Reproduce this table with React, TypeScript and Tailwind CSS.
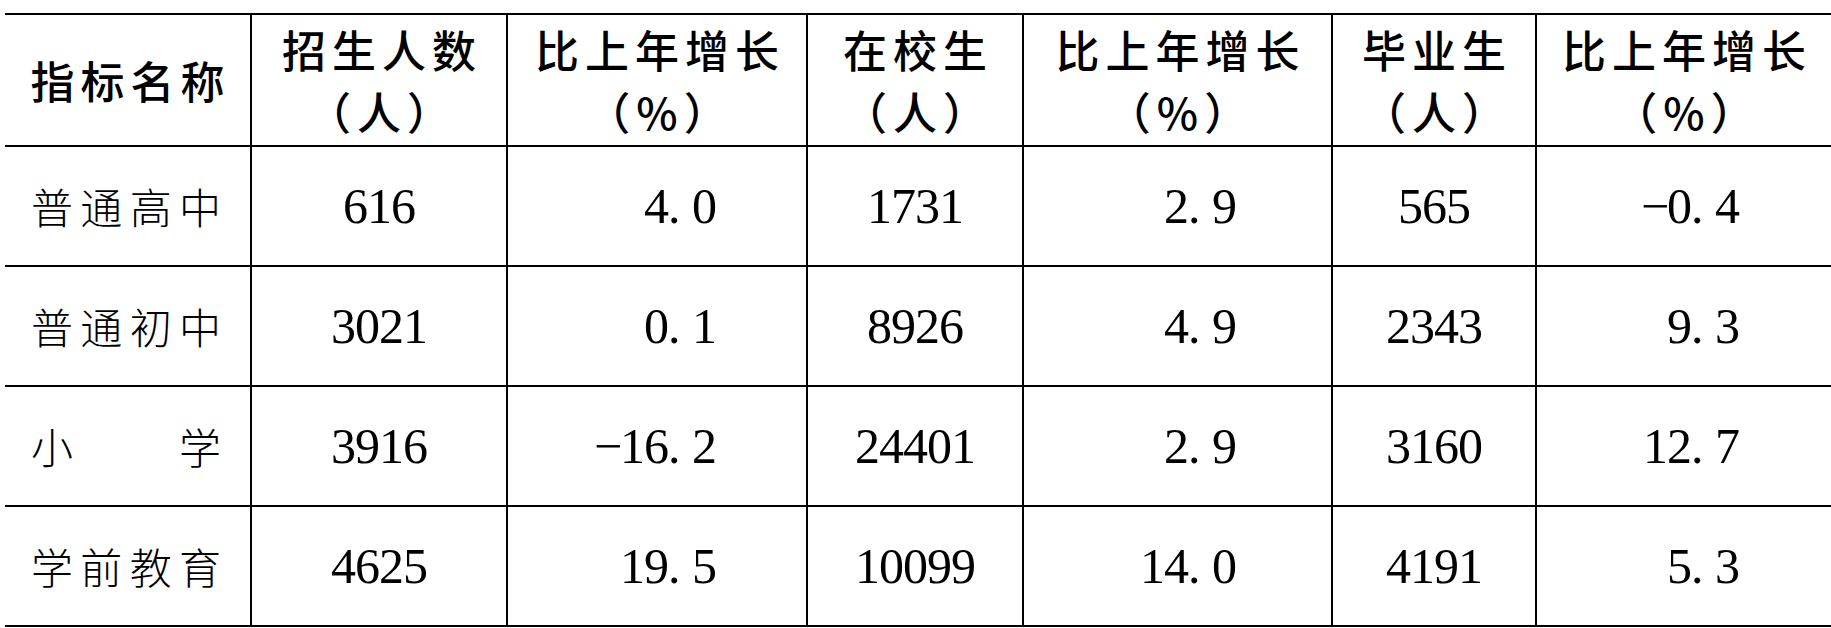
import React from "react";

const cjk = "font-['Noto_Sans_CJK_SC',sans-serif]";
const num = "font-['Liberation_Serif','Noto_Sans_CJK_SC',serif]";

type Row = {
  name: string;
  v: [string, string, string, string, string, string];
};

const rows: Row[] = [
  { name: "普通高中", v: ["616", "4.0", "1731", "2.9", "565", "-0.4"] },
  { name: "普通初中", v: ["3021", "0.1", "8926", "4.9", "2343", "9.3"] },
  { name: "小学", v: ["3916", "-16.2", "24401", "2.9", "3160", "12.7"] },
  { name: "学前教育", v: ["4625", "19.5", "10099", "14.0", "4191", "5.3"] },
];

function Num({ text }: { text: string }) {
  const neg = text.startsWith("-");
  const body = neg ? text.slice(1) : text;
  const [a, b] = body.split(".");
  return (
    <span className={`${num} text-[50px] tracking-[-1px] leading-none text-black whitespace-nowrap`}>
      {neg && <span className="inline-block w-[26px] text-left">−</span>}
      {a}
      {b !== undefined && (
        <>
          <span className="inline-block w-[24px] text-left">.</span>
          {b}
        </>
      )}
    </span>
  );
}

function Head({ l1, l2 }: { l1: string; l2?: string }) {
  return (
    <div
      className={`${cjk} font-medium text-[44px] tracking-[6px] leading-[62px] text-black text-center pl-[6px] flex flex-col items-center justify-center`}
    >
      <span>{l1}</span>
      {l2 && <span>{l2}</span>}
    </div>
  );
}

export default function App() {
  const cell = "border-black border-b-2 border-r-2 flex items-center";
  const last = "border-black border-b-2 flex items-center";
  return (
    <div className="w-[1831px] h-[628px] bg-white overflow-hidden pt-[13px] pl-[5px]">
      <div className="border-t-2 border-black grid grid-cols-[247px_256px_300px_216px_309px_204px_1fr] grid-rows-[132px_120px_120px_120px_120px]">
        <div className={`${cell} justify-center`}>
          <Head l1="指标名称" />
        </div>
        <div className={`${cell} justify-center`}>
          <Head l1="招生人数" l2="（人）" />
        </div>
        <div className={`${cell} justify-center`}>
          <Head l1="比上年增长" l2="（%）" />
        </div>
        <div className={`${cell} justify-center`}>
          <Head l1="在校生" l2="（人）" />
        </div>
        <div className={`${cell} justify-center`}>
          <Head l1="比上年增长" l2="（%）" />
        </div>
        <div className={`${cell} justify-center`}>
          <Head l1="毕业生" l2="（人）" />
        </div>
        <div className={`${last} justify-center`}>
          <Head l1="比上年增长" l2="（%）" />
        </div>

        {rows.map((r) => (
          <React.Fragment key={r.name}>
            <div className={`${cell} pl-[26px]`}>
              <div
                className={`${cjk} font-light text-[42px] leading-none text-black w-[190px] flex justify-between`}
              >
                {r.name.split("").map((c, i) => (
                  <span key={i}>{c}</span>
                ))}
              </div>
            </div>
            <div className={`${cell} justify-center`}>
              <Num text={r.v[0]} />
            </div>
            <div className={`${cell} justify-end pr-[90px]`}>
              <Num text={r.v[1]} />
            </div>
            <div className={`${cell} justify-center`}>
              <Num text={r.v[2]} />
            </div>
            <div className={`${cell} justify-end pr-[95px]`}>
              <Num text={r.v[3]} />
            </div>
            <div className={`${cell} justify-center`}>
              <Num text={r.v[4]} />
            </div>
            <div className={`${last} justify-end pr-[92px]`}>
              <Num text={r.v[5]} />
            </div>
          </React.Fragment>
        ))}
      </div>
    </div>
  );
}
